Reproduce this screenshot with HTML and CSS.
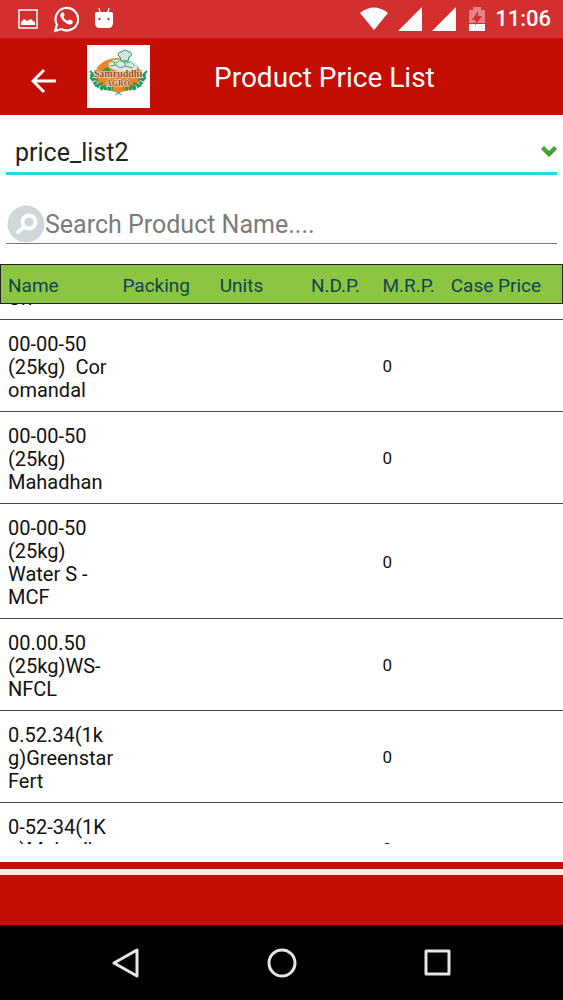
FILE: index.html
```html
<!DOCTYPE html>
<html lang="en">
<head>
    <meta charset="UTF-8">
    <meta name="viewport" content="width=device-width, initial-scale=1.0">
    <title>Product Price List</title>
    <link rel="stylesheet" href="styles.css">
</head>
<body>

    <div class="status-bar">
        <div class="status-group">
            <svg class="icon-photo" viewBox="0 0 20 20" width="20" height="20">
                <path d="M1 1h18v18H1z" fill="none" stroke="#fff" stroke-width="1.5"/>
                <path d="M3 16v-3l3-3 3 2 4-2 2 2 2 1v3z" fill="#fff"/>
            </svg>
            <svg class="icon-chat" viewBox="0 0 26 28" width="26" height="28">
                <path d="M2 26l2-6.300a11.300 11.300 0 1 1 4.300 4.300z" fill="none" stroke="#fff" stroke-width="2.200" stroke-linejoin="round"/>
                <path d="M9 7.500c-3 1.500-1.500 5.500 1.500 8.500s7 5 9 2c1-2 0-2.200-2.700-3.500-1-.4-1.300 1.300-2.300 1.300-1.500-.3-3.800-2.500-4-3.800 0-.8 1.300-1.200 1-2.200-.8-2-1-2.800-2.500-2.300z" fill="#fff"/>
            </svg>
            <svg class="icon-robot" viewBox="0 0 20 22" width="20" height="22">
                <path d="M5 0l1.500 6M15 0l-1.500 6" stroke="#fff" stroke-width="1.300"/>
                <path d="M1 6q0-2 2-2h14q2 0 2 2v9q0 5-5 5H6q-5 0-5-5z" fill="#fff"/>
                <circle cx="5.500" cy="11" r="1.200" fill="#d32f2f"/>
                <circle cx="14.500" cy="11" r="1.200" fill="#d32f2f"/>
            </svg>
        </div>
        <div class="status-group status-right">
            <svg viewBox="0 0 28 24" width="28" height="24">
                <path d="M0 6Q14-5 28 6L14 23z" fill="#fff"/>
            </svg>
            <svg viewBox="0 0 24 24" width="24" height="24">
                <path d="M24 0v24H0z" fill="#fff"/>
            </svg>
            <svg viewBox="0 0 24 24" width="24" height="24">
                <path d="M24 0v24H0z" fill="#fff"/>
            </svg>
            <svg class="icon-battery" viewBox="0 0 16 24" width="16" height="24">
                <path d="M0 3h4V0h8v3h4v13H0z" fill="#e58282"/>
                <path d="M0 17h16v7H0z" fill="#fff"/>
                <path d="M9 4l-6 9h4l-1 6 7-10H9z" fill="#d32f2f"/>
            </svg>
            <span class="clock">11:06</span>
        </div>
    </div>

    <header class="app-bar">
        <button class="back-btn" type="button" aria-label="Back">
            <svg viewBox="0 0 26 26" width="26" height="26">
                <path d="M25 13H2M13 2L2 13l11 11" fill="none" stroke="#fff" stroke-width="3"/>
            </svg>
        </button>
        <svg class="logo" viewBox="0 0 63 63" width="63" height="63" role="img" aria-label="Samruddhi Agro">
            <path d="M0 0h63v63H0z" fill="#fff"/>
            <ellipse cx="31" cy="30" rx="23" ry="17" fill="#f08428"/>
            <path d="M22 22c-2-6 5-8 9-7 1-3 12-2 13 1 5 1 8 4 6 8-8 3-21 4-28-2z" fill="#d5e9df"/>
            <path d="M33 12c-4-2-1-6 2-5 1-3 6-2 6 0 4-1 5 4 1 5l-1 4h-7z" fill="#cfe6dc" stroke="#26866a" stroke-width="1"/>
            <path d="M23 16l7 2 3-3 5 3 6-1M23 21l6-1 4 3 5-2 8 2M27 18l4 4M36 16l3 5M45 18l3 3" fill="none" stroke="#5aa68a" stroke-width="1"/>
            <path d="M5 29c1 11 9 16 21 14M57 29c-1 11-9 16-21 14" fill="none" stroke="#1e9c60" stroke-width="4" stroke-dasharray="3 1"/>
            <path d="M3 26l6 6M60 26l-6 6M3 33l8 2M59 33l-8 2M8 41l8-3M54 41l-8-3M14 45l5-5M48 45l-5-5" stroke="#1e9c60" stroke-width="2"/>
            <path d="M15 25l5-3 4 3-4 2z" fill="#3a9a35"/>
            <text class="logo-name" x="31" y="32" text-anchor="middle">Samruddhi</text>
            <text class="logo-sub" x="31" y="41" text-anchor="middle">AGRO</text>
            <path d="M28 46l7 4M35 46l-7 4" stroke="#4f9a75" stroke-width="1"/>
        </svg>
        <h1 class="title">Product Price List</h1>
    </header>

    <main class="content">
        <div class="select-box">
            <select class="price-select" aria-label="Price list">
                <option>price_list2</option>
            </select>
            <svg class="chevron" viewBox="0 0 16 11" width="16" height="11">
                <path d="M0 3l3-3 5 5 5-5 3 3-8 8z" fill="#3b9b28"/>
                <path d="M2 3l1-1 5 5 5-5 1 1-6 5z" fill="#4fb336"/>
            </svg>
        </div>

        <div class="search-box">
            <svg viewBox="0 0 38 38" width="38" height="38">
                <circle cx="19" cy="19" r="18.500" fill="#d0d7db"/>
                <circle cx="22" cy="17" r="6.500" fill="none" stroke="#fff" stroke-width="4"/>
                <path d="M17 22l-6 5" stroke="#fff" stroke-width="4" stroke-linecap="round"/>
            </svg>
            <input class="search-input" type="text" placeholder="Search Product Name...." aria-label="Search product name">
        </div>

        <div class="price-list" id="priceList">
            <table class="price-table">
                <colgroup>
                    <col class="col-name">
                    <col class="col-packing">
                    <col class="col-units">
                    <col class="col-ndp">
                    <col class="col-mrp">
                    <col class="col-case">
                </colgroup>
                <thead>
                    <tr>
                        <th>Name</th>
                        <th>Packing</th>
                        <th>Units</th>
                        <th>N.D.P.</th>
                        <th>M.R.P.</th>
                        <th>Case Price</th>
                    </tr>
                </thead>
                <tbody>
                    <tr><td>Urr</td><td></td><td></td><td></td><td></td><td></td></tr>
                    <tr><td>00-00-50<br>(25kg)&nbsp; Cor<br>omandal</td><td></td><td></td><td></td><td>0</td><td></td></tr>
                    <tr><td>00-00-50<br>(25kg)<br>Mahadhan</td><td></td><td></td><td></td><td>0</td><td></td></tr>
                    <tr><td>00-00-50<br>(25kg)<br>Water S -<br>MCF</td><td></td><td></td><td></td><td>0</td><td></td></tr>
                    <tr><td>00.00.50<br>(25kg)WS-<br>NFCL</td><td></td><td></td><td></td><td>0</td><td></td></tr>
                    <tr><td>0.52.34(1k<br>g)Greenstar<br>Fert</td><td></td><td></td><td></td><td>0</td><td></td></tr>
                    <tr><td>0-52-34(1K<br>g)Mahadh<br>an</td><td></td><td></td><td></td><td>0</td><td></td></tr>
                </tbody>
            </table>
        </div>
    </main>

    <footer class="footer"></footer>

    <nav class="nav-bar">
        <button type="button" aria-label="Back">
            <svg viewBox="0 0 30 30" width="30" height="30">
                <path d="M26 2v26L3 15z" fill="none" stroke="#e6e6e6" stroke-width="3" stroke-linejoin="round"/>
            </svg>
        </button>
        <button type="button" aria-label="Home">
            <svg viewBox="0 0 30 30" width="30" height="30">
                <circle cx="15" cy="15" r="13" fill="none" stroke="#e6e6e6" stroke-width="3"/>
            </svg>
        </button>
        <button type="button" aria-label="Recent apps">
            <svg viewBox="0 0 30 30" width="30" height="30">
                <path d="M3 3h23v23H3z" fill="none" stroke="#e6e6e6" stroke-width="3" stroke-linejoin="round"/>
            </svg>
        </button>
    </nav>

    <script>
        // Open the list just past its first product
        const list = document.getElementById('priceList');
        const firstRow = list.querySelector('tbody tr');
        list.scrollTop = firstRow.offsetHeight - 16;
    </script>
</body>
</html>
```
FILE: styles.css
```css
:root {
    --primary-color: #c40d03;
    --status-color: #d32f2f;
    --header-green: #8bc541;
    --header-text: #0d4650;
    --accent-color: #26d7e8;
}

* {
    margin: 0;
    padding: 0;
    box-sizing: border-box;
    font-family: Roboto, sans-serif;
}

body {
    height: 100vh;
    display: flex;
    flex-direction: column;
    background-color: #fff;
    color: #111;
}

svg {
    display: block;
    flex-shrink: 0;
}

button {
    background: none;
    border: none;
    cursor: pointer;
}

.status-bar {
    display: flex;
    justify-content: space-between;
    align-items: center;
    height: 38px;
    padding: 0 12px 0 18px;
    background-color: var(--status-color);
}

.status-group {
    display: flex;
    align-items: center;
    gap: 15px;
}

.status-right {
    gap: 10px;
}

.status-right .icon-battery {
    margin-left: 3px;
}

.clock {
    color: #fff;
    font-size: 22px;
    font-weight: 500;
    line-height: 24px;
}

.app-bar {
    display: flex;
    align-items: center;
    height: 77px;
    padding-left: 31px;
    background-color: var(--primary-color);
}

.back-btn {
    padding-top: 8px;
}

.logo {
    margin-left: 30px;
}

.logo-name,
.logo-sub {
    font-family: "Liberation Serif", serif;
    font-weight: bold;
    fill: #8b4a2c;
    stroke: #fff0e0;
    stroke-width: 1px;
    paint-order: stroke;
}

.logo-name {
    font-size: 10px;
}

.logo-sub {
    font-size: 8px;
}

.title {
    margin-left: 64px;
    padding-top: 2px;
    color: #fff;
    font-size: 28px;
    font-weight: 400;
}

.content {
    flex: 1;
    min-height: 0;
    display: flex;
    flex-direction: column;
    padding-bottom: 18px;
}

.select-box {
    display: flex;
    align-items: center;
    height: 44px;
    margin: 16px 6px 0;
    border-bottom: 3px solid var(--accent-color);
}

.price-select {
    flex: 1;
    height: 40px;
    padding: 2px 0 0 9px;
    appearance: none;
    border: none;
    background: none;
    color: #222;
    font-size: 25px;
}

.search-box {
    display: flex;
    align-items: center;
    height: 39px;
    margin: 30px 6px 0;
    padding-left: 1px;
    border-bottom: 1px solid #777;
}

.search-input {
    flex: 1;
    min-width: 0;
    height: 36px;
    border: none;
    outline: none;
    background: none;
    font-size: 25px;
}

.search-input::placeholder {
    color: #7b7b7b;
}

.price-list {
    flex: 1;
    min-height: 0;
    margin-top: 20px;
    overflow-y: auto;
    scrollbar-width: none;
}

.price-table {
    width: 100%;
    table-layout: fixed;
    border-collapse: separate;
    border-spacing: 0;
}

.col-name { width: 20.5%; }
.col-packing { width: 17.3%; }
.col-units { width: 16.2%; }
.col-ndp { width: 12.7%; }
.col-mrp { width: 13%; }

.price-table th {
    position: sticky;
    top: 0;
    height: 40px;
    padding: 3px 0 0 7px;
    border: solid #222;
    border-width: 1px 0;
    background-color: var(--header-green);
    color: var(--header-text);
    font-size: 19px;
    font-weight: 400;
    text-align: left;
    white-space: nowrap;
}

.price-table th:first-child {
    border-left-width: 1px;
}

.price-table th:last-child {
    border-right-width: 1px;
    padding-left: 2px;
}

.price-table td {
    padding: 12px 0 10px 7px;
    border-bottom: 1px solid #444;
    font-size: 17px;
    line-height: 23px;
    white-space: nowrap;
}

.price-table td:first-child {
    padding: 13px 0 9px 8px;
    font-size: 20px;
}

.footer {
    height: 63px;
    border-top: 7px solid var(--primary-color);
    background: linear-gradient(#fbe9e1 6px, var(--primary-color) 6px);
}

.nav-bar {
    display: flex;
    justify-content: center;
    align-items: center;
    gap: 126px;
    height: 75px;
    background-color: #000;
}

.nav-bar button {
    width: 30px;
    height: 30px;
}
```
